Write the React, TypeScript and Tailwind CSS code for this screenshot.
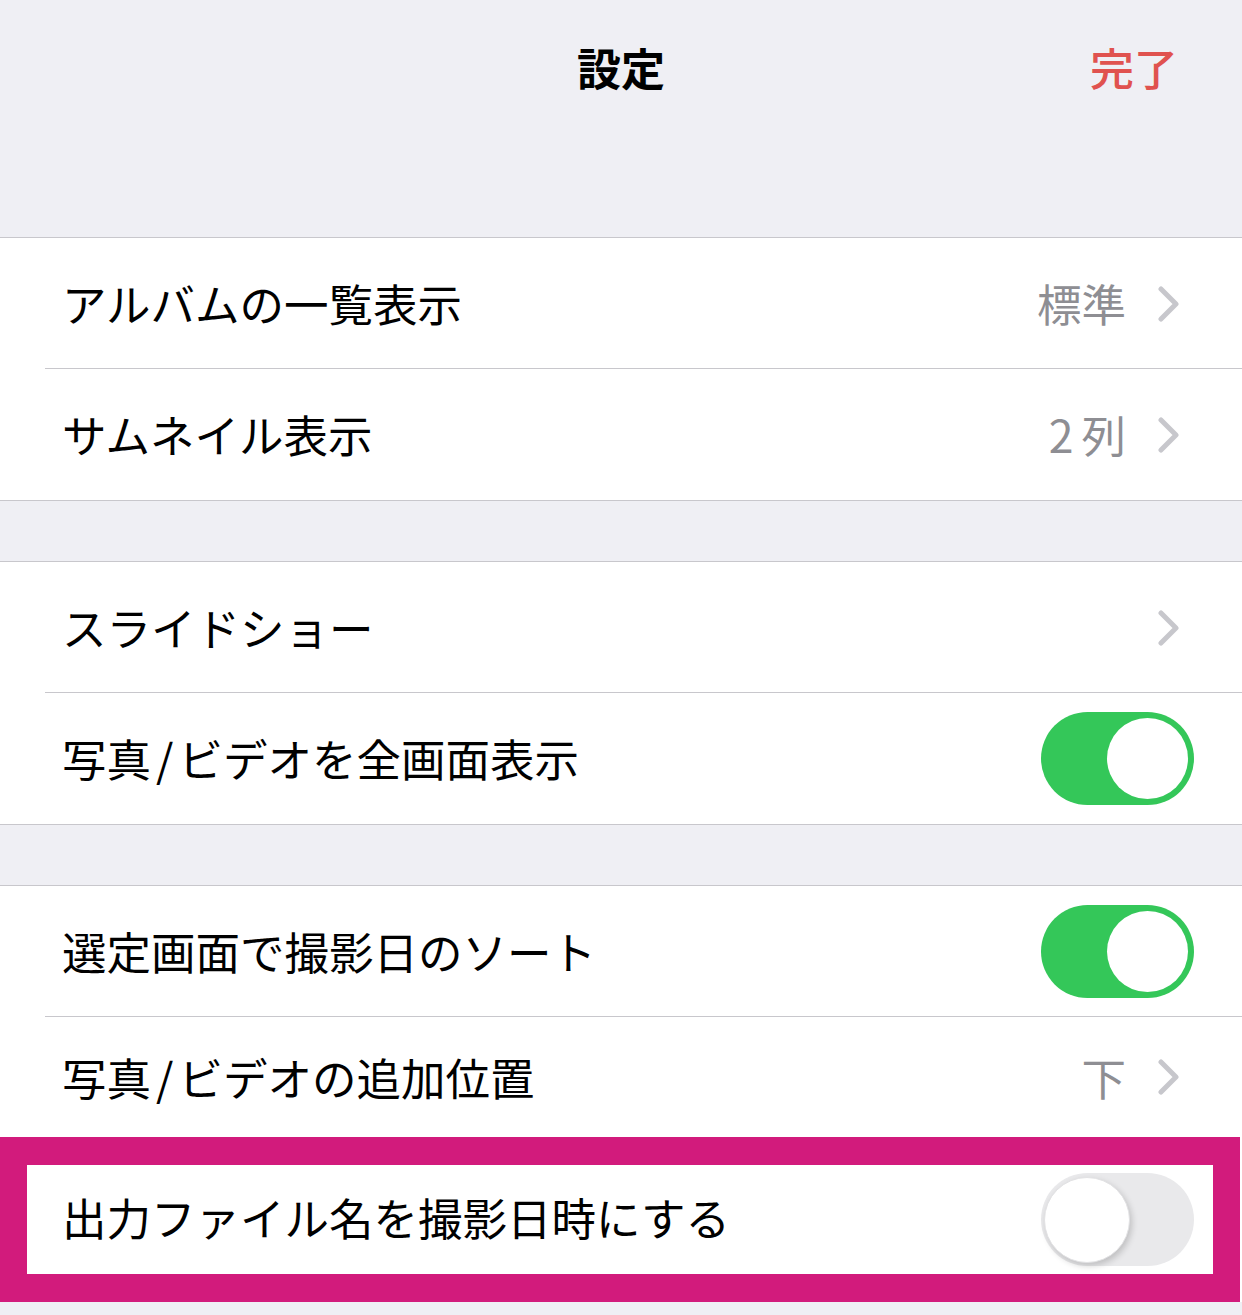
import type { ReactNode } from "react"

const font = { fontFamily: '"Noto Sans CJK JP", "Noto Sans", sans-serif' }

function Chevron() {
  return (
    <svg width="22" height="36" viewBox="0 0 22 36" className="ml-[32px]">
      <polyline
        points="3,3 18,18 3,33"
        fill="none"
        stroke="#c7c7cc"
        strokeWidth="5"
        strokeLinecap="round"
        strokeLinejoin="round"
      />
    </svg>
  )
}

function Toggle({ on }: { on: boolean }) {
  return on ? (
    <div className="w-[153px] h-[93px] rounded-full bg-[#34c759] flex items-center justify-end pr-[6px]">
      <div className="w-[81px] h-[81px] rounded-full bg-white" />
    </div>
  ) : (
    <div className="w-[153px] h-[93px] rounded-full bg-[#e9e9eb] flex items-center pl-[3px]">
      <div className="w-[86px] h-[86px] rounded-full bg-white shadow-[2px_3px_6px_rgba(0,0,0,0.18)] border border-[#e2e2e4]" />
    </div>
  )
}

// slash in labels sits a little wider in the original font
function Label({ text }: { text: string }) {
  const parts = text.split("/")
  return (
    <>
      {parts.map((p, i) => (
        <span key={i}>
          {i > 0 && <span className="mx-[5px]">/</span>}
          {p}
        </span>
      ))}
    </>
  )
}

function Row({
  label,
  value,
  chevron,
  toggle,
  last,
  height = "h-[131px]",
}: {
  label: string
  value?: ReactNode
  chevron?: boolean
  toggle?: boolean
  last?: boolean
  height?: string
}) {
  return (
    <div className={`relative flex items-center bg-white ${height}`}>
      <div className="flex-1 pl-[62px] text-[44.5px] text-black leading-none">
        <Label text={label} />
      </div>
      {value && <span className="text-[44.5px] text-[#8e8e93] leading-none">{value}</span>}
      {chevron && <div className="pr-[62px]"><Chevron /></div>}
      {toggle !== undefined && (
        <div className="pr-[48px]">
          <Toggle on={toggle} />
        </div>
      )}
      {!last && <div className="absolute left-[45px] right-0 bottom-0 h-px bg-[#c8c7cc]" />}
    </div>
  )
}

function Section({ children }: { children: ReactNode }) {
  return <div className="border-y border-[#c8c7cc] bg-white">{children}</div>
}

export default function App() {
  return (
    <div className="w-[1242px] h-[1315px] bg-[#efeff4] overflow-hidden" style={font}>
      {/* Navigation bar */}
      <div className="relative h-[134px] flex items-center justify-center">
        <span className="text-[44px] font-bold text-black leading-none">設定</span>
        <span className="absolute right-[64px] top-1/2 -translate-y-1/2 text-[44px] font-medium text-[#e0524f] leading-none">
          完了
        </span>
      </div>
      <div className="h-[103px]" />

      <Section>
        <Row label="アルバムの一覧表示" value="標準" chevron />
        <Row
          label="サムネイル表示"
          value={
            <>
              <span className="mr-[8px]">2</span>列
            </>
          }
          chevron
          last
        />
      </Section>

      <div className="h-[60px]" />

      <Section>
        <Row label="スライドショー" chevron />
        <Row label="写真/ビデオを全画面表示" toggle={true} last />
      </Section>

      <div className="h-[60px]" />

      <div className="border-t border-[#c8c7cc] bg-white">
        <Row label="選定画面で撮影日のソート" toggle={true} />
        <Row label="写真/ビデオの追加位置" value="下" chevron height="h-[120px]" last />

        {/* Highlighted row */}
        <div className="w-[1240px] border-[#d21b7c] border-y-[28px] border-x-[27px] bg-white">
          <div className="h-[109px] flex items-center">
            <div className="flex-1 pl-[35px] text-[44.5px] text-black leading-none -mt-[4px]">
              出力ファイル名を撮影日時にする
            </div>
            <div className="pr-[19px]">
              <Toggle on={false} />
            </div>
          </div>
        </div>
      </div>
    </div>
  )
}
